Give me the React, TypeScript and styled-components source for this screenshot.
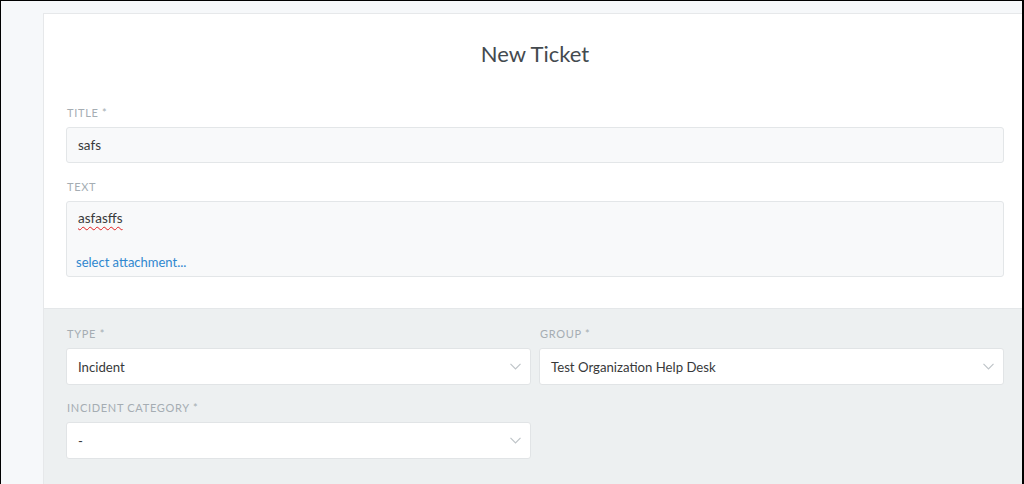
import React from 'react';
import styled, { createGlobalStyle } from 'styled-components';

const GlobalStyle = createGlobalStyle`
  html, body {
    margin: 0;
    padding: 0;
    background: #000;
  }
  * {
    box-sizing: border-box;
  }
`;

// outer window frame
const Frame = styled.div`
  width: 1024px;
  height: 484px;
  border-top: 1px solid #000;
  border-left: 1px solid #000;
  border-right: 2px solid #000;
  background: #f6f8fa;
  overflow: hidden;
  display: flex;
  padding: 12px 0 0 42px;
  font-family: Lato, 'Open Sans', sans-serif;
`;

const Panel = styled.div`
  flex: 1;
  display: flex;
  flex-direction: column;
  border-top: 1px solid #e6e8ea;
  border-left: 1px solid #e6e8ea;
  background: #fff;
`;

const Header = styled.div`
  padding: 25px 18px 31px 22px;
  border-bottom: 1px solid #e4e7e9;
`;

const Title = styled.h1`
  margin: 0 0 36px;
  text-align: center;
  font-size: 22px;
  line-height: 30px;
  font-weight: 400;
  color: #444a4f;
`;

const Field = styled.div`
  display: flex;
  flex-direction: column;
  gap: 7px;
  margin-bottom: 16px;

  &:last-child {
    margin-bottom: 0;
  }
`;

const Label = styled.label`
  font-size: 11px;
  line-height: 15px;
  letter-spacing: 0.7px;
  text-transform: uppercase;
  color: #a5adb3;
  padding-left: 1px;
`;

const Input = styled.div`
  height: 36px;
  display: flex;
  align-items: center;
  padding: 0 11px;
  background: #f8f9fa;
  border: 1px solid #e3e6e8;
  border-radius: 3px;
  font-size: 13.5px;
  color: #38393a;
`;

const TextArea = styled.div`
  height: 76px;
  display: flex;
  flex-direction: column;
  justify-content: space-between;
  padding: 8px 11px 6px 9px;
  background: #f8f9fa;
  border: 1px solid #e3e6e8;
  border-radius: 3px;
  font-size: 13.5px;
  color: #38393a;
`;

const Misspelled = styled.span`
  padding-left: 2px;
  text-decoration: underline wavy #e02020;
  text-decoration-thickness: 1px;
  text-underline-offset: 3px;
`;

const AttachLink = styled.a`
  font-size: 13px;
  color: #2f87cf;
  text-decoration: none;
  cursor: pointer;
`;

const Attributes = styled.div`
  flex: 1;
  background: #edf0f1;
  padding: 17px 18px 0 22px;
  display: grid;
  grid-template-columns: 1fr 1fr;
  column-gap: 8px;
  row-gap: 15px;
  align-content: start;

  ${Field} {
    margin-bottom: 0;
  }
`;

const SelectBox = styled.div`
  height: 37px;
  display: flex;
  align-items: center;
  justify-content: space-between;
  padding: 0 9px 0 11px;
  background: #fff;
  border: 1px solid #e1e4e6;
  border-radius: 3px;
  font-size: 13.2px;
  color: #38393a;
`;

const Chevron = () => (
  <svg width="11" height="7" viewBox="0 0 11 7" fill="none">
    <path d="M0.5 0.8 L5.5 5.8 L10.5 0.8" stroke="#bfc4c8" strokeWidth="1.2" />
  </svg>
);

function Select({ value }: { value: string }) {
  return (
    <SelectBox>
      <span>{value}</span>
      <Chevron />
    </SelectBox>
  );
}

export default function App() {
  return (
    <>
      <GlobalStyle />
      <Frame>
        <Panel>
          <Header>
            <Title>New Ticket</Title>
            <Field>
              <Label>Title *</Label>
              <Input>safs</Input>
            </Field>
            <Field>
              <Label>Text</Label>
              <TextArea>
                <span>
                  <Misspelled>asfasffs</Misspelled>
                </span>
                <AttachLink>select attachment...</AttachLink>
              </TextArea>
            </Field>
          </Header>
          <Attributes>
            <Field>
              <Label>Type *</Label>
              <Select value="Incident" />
            </Field>
            <Field>
              <Label>Group *</Label>
              <Select value="Test Organization Help Desk" />
            </Field>
            <Field>
              <Label>Incident Category *</Label>
              <Select value="-" />
            </Field>
          </Attributes>
        </Panel>
      </Frame>
    </>
  );
}
